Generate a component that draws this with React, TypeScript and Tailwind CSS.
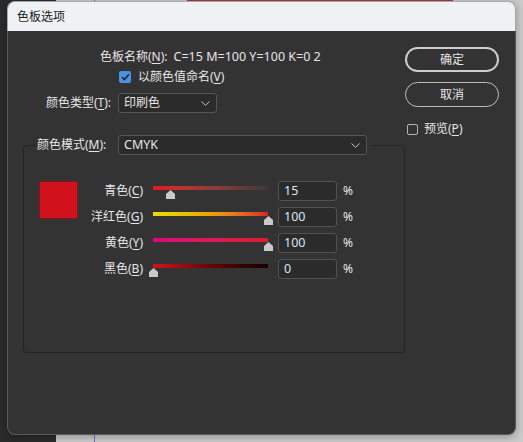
import React from "react";

type Row = { label: string; key: string; value: number; grad: string };

const rows: Row[] = [
  { label: "青色", key: "C", value: 15, grad: "bg-linear-to-r from-[#e8121f] to-[#3b393b]" },
  { label: "洋红色", key: "G", value: 100, grad: "bg-linear-to-r from-[#e9df00] via-[#e8a400] to-[#dc1f26]" },
  { label: "黄色", key: "Y", value: 100, grad: "bg-linear-to-r from-[#e0067c] to-[#dc1c2a]" },
  { label: "黑色", key: "B", value: 0, grad: "bg-linear-to-r from-[#d3141e] to-[#120000]" },
];

function Chevron() {
  return (
    <svg width="9" height="5" viewBox="0 0 9 5" className="shrink-0">
      <path d="M0.5 0.5 L4.5 4.3 L8.5 0.5" fill="none" stroke="#c4c4c4" strokeWidth="1" />
    </svg>
  );
}

function Thumb() {
  return (
    <svg width="9" height="9" viewBox="0 0 9 9">
      <path d="M4.5 0 L9 4 L9 9 L0 9 L0 4 Z" fill="#c9c9c9" />
    </svg>
  );
}

export default function App() {
  return (
    <div className="relative w-[523px] h-[442px] overflow-hidden bg-[#2b2b2b] font-['Noto_Sans','Noto_Sans_CJK_SC',sans-serif] text-[12px]">
      <div className="absolute left-[56px] top-0 right-0 bottom-0 bg-[#cbcbcb]" />
      <div className="absolute left-[94px] top-0 bottom-0 w-px bg-[#6b6bea]" />
      <div className="absolute left-[187px] top-0 w-[266px] h-px bg-[#b03a3a]" />

      <div className="absolute left-[7px] top-[1px] w-[509px] h-[434px] flex flex-col rounded-[8px] shadow-[0_2px_8px_rgba(0,0,0,0.3)]">
        <div className="h-[30px] shrink-0 bg-[#eef2f5] border-t border-x border-[#a8a8a8] rounded-t-[8px] flex items-center pl-[9px] text-[#1b1b1b]">
          色板选项
        </div>
        <div className="flex-1 bg-[#333333] border-x border-b border-[#5a5a5a] rounded-b-[8px] flex pt-[16px] text-[#e6e6e6]">
          {/* left column */}
          <div className="w-[397px] pl-[15px] flex flex-col">
            <div className="h-[20px] flex items-center pl-[77px] whitespace-nowrap">
              <span>
                色板名称(<u className="underline-offset-2">N</u>):
              </span>
              <span className="ml-[6px] text-[12.5px]">C=15 M=100 Y=100 K=0 2</span>
            </div>
            <div className="h-[20px] flex items-center pl-[96px]">
              <div className="w-[12px] h-[12px] rounded-[2px] bg-[#4a93e2] flex items-center justify-center">
                <svg width="9" height="8" viewBox="0 0 9 8">
                  <path d="M1 4.2 L3.4 6.5 L8 1.2" fill="none" stroke="#1c2633" strokeWidth="1.6" />
                </svg>
              </div>
              <span className="ml-[7px]">
                以颜色值命名(<u className="underline-offset-2">V</u>)
              </span>
            </div>
            <div className="mt-[6px] h-[20px] flex items-center">
              <div className="w-[88px] text-right whitespace-nowrap">
                颜色类型(<u className="underline-offset-2">T</u>):
              </div>
              <div className="ml-[7px] w-[99px] h-[20px] border border-[#555555] rounded-[3px] bg-[#2b2b2b] flex items-center justify-between pl-[5px] pr-[6px]">
                <span>印刷色</span>
                <Chevron />
              </div>
            </div>

            <fieldset className="mt-[22px] w-[382px] h-[218px] border border-[#232323] rounded-[3px] pl-[15px] pr-0 pb-0 pt-0 m-0">
              <legend className="ml-[-4px] pl-[2px] pr-[4px]">
                <div className="h-[20px] flex items-center">
                  <div className="w-[74px] whitespace-nowrap">
                    颜色模式(<u className="underline-offset-2">M</u>):
                  </div>
                  <div className="ml-[7px] w-[249px] h-[20px] border border-[#555555] rounded-[3px] bg-[#2b2b2b] flex items-center justify-between pl-[5px] pr-[6px]">
                    <span className="text-[12.5px]">CMYK</span>
                    <Chevron />
                  </div>
                </div>
              </legend>

              <div className="flex pt-[26px]">
                <div className="w-[39px] h-[38px] bg-[#d1121d] border border-[#7a1a1f]" />
                <div className="flex flex-col gap-[6px]">
                  {rows.map((r) => (
                    <div key={r.key} className="h-[20px] flex items-center">
                      <div className="w-[65px] text-right whitespace-nowrap">
                        {r.label}(<u className="underline-offset-2">{r.key}</u>)
                      </div>
                      <div className="relative ml-[10px] w-[115px] h-[20px]">
                        <div className={`mt-[5px] h-[4px] w-full ${r.grad}`} />
                        <div
                          className="absolute top-[9px]"
                          style={{ left: `${(r.value / 100) * 115 - 4.5}px` }}
                        >
                          <Thumb />
                        </div>
                      </div>
                      <div className="ml-[10px] w-[59px] h-[20px] border border-[#525252] rounded-[3px] bg-[#2b2b2b] flex items-center pl-[5px] text-[#dbe5f1] text-[12.5px]">
                        {r.value}
                      </div>
                      <span className="ml-[6px]">%</span>
                    </div>
                  ))}
                </div>
              </div>
            </fieldset>
          </div>

          {/* right column */}
          <div className="w-[94px] flex flex-col">
            <div className="h-[25px] rounded-full border-2 border-[#cdcdcd] flex items-center justify-center">
              确定
            </div>
            <div className="mt-[10px] h-[25px] rounded-full border border-[#bdbdbd] flex items-center justify-center">
              取消
            </div>
            <div className="mt-[12px] h-[20px] flex items-center pl-[2px]">
              <div className="w-[11px] h-[11px] border border-[#b5b5b5] rounded-[2px]" />
              <span className="ml-[6px]">
                预览(<u className="underline-offset-2">P</u>)
              </span>
            </div>
          </div>
        </div>
      </div>
    </div>
  );
}
